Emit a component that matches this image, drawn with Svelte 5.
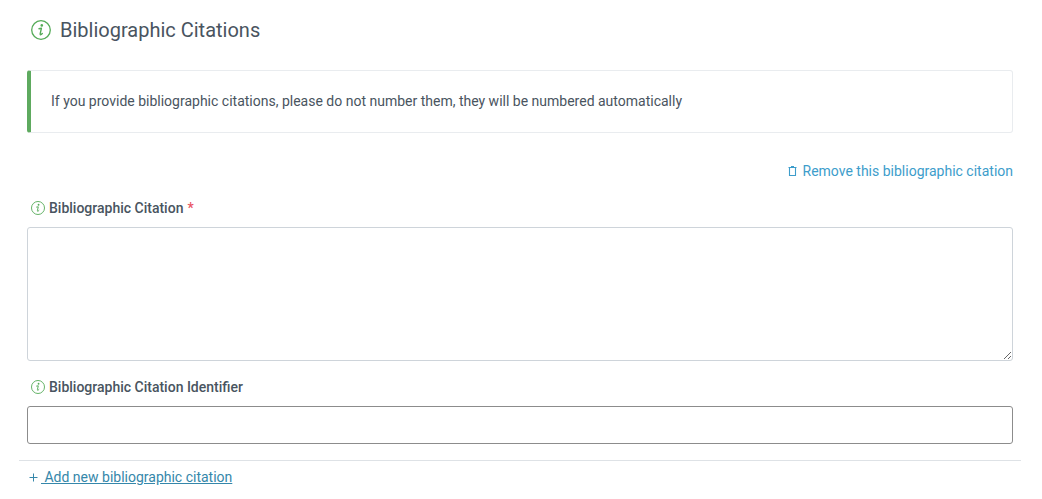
<script lang="ts">
  let citation = $state('');
  let identifier = $state('');
</script>

{#snippet info()}
  <svg class="info" viewBox="0 0 20 20" aria-hidden="true">
    <circle cx="10" cy="10" r="9.3" fill="none" stroke="currentColor" stroke-width="1.3" />
    <circle cx="10.8" cy="5.4" r="1.3" fill="currentColor" />
    <path d="M8 8.7 L10.4 8.3 L9.2 13.6 Q9 15.2 10.2 14.5 L11.3 13.5" fill="none" stroke="currentColor" stroke-width="1.4" stroke-linecap="round" stroke-linejoin="round" />
  </svg>
{/snippet}

<main>
  <h1>{@render info()}Bibliographic Citations</h1>
  <p class="notice">If you provide bibliographic citations, please do not number them, they will be numbered automatically</p>

  <div class="actions">
    <button type="button" class="remove">
      <svg viewBox="0 0 9 11" aria-hidden="true">
        <path d="M0.5 1.5H8.5M3 0.5H6M1.5 2V9.5H7.5V2" fill="none" stroke="currentColor" stroke-width="1.1" />
      </svg>
      Remove this bibliographic citation
    </button>
  </div>

  <label for="citation">{@render info()}Bibliographic Citation<span class="required">*</span></label>
  <textarea id="citation" required bind:value={citation}></textarea>

  <label for="identifier">{@render info()}Bibliographic Citation Identifier</label>
  <input id="identifier" type="text" bind:value={identifier} />

  <footer>
    <button type="button" class="add">
      <svg viewBox="0 0 9 9" aria-hidden="true"><path d="M4.5 0.5V8.5M0.5 4.5H8.5" stroke="currentColor" stroke-width="1" /></svg>
      <span>&nbsp;Add new bibliographic citation</span>
    </button>
  </footer>
</main>

<style>
  :global(body) {
    margin: 0;
    background: #fff;
  }
  main {
    display: flex;
    flex-direction: column;
    box-sizing: border-box;
    padding: 16px 29px 8px 27px;
    font: 14px/21px Roboto, sans-serif;
    color: #495460;
  }
  h1 {
    display: flex;
    align-items: center;
    gap: 9px;
    margin: 0;
    padding-left: 4px;
    font-size: 20px;
    line-height: 28px;
    font-weight: 400;
  }
  .info {
    flex: none;
    width: 14px;
    height: 14px;
    color: #55ab58;
  }
  h1 .info {
    width: 20px;
    height: 20px;
  }
  .notice {
    margin: 26px 0 28px;
    padding: 20px;
    border: 1px solid #e9ecef;
    border-left: 4px solid #5eaa5f;
    border-radius: 3px;
  }
  .actions {
    display: flex;
    justify-content: flex-end;
    margin-bottom: 16px;
  }
  button {
    display: flex;
    align-items: center;
    padding: 0;
    border: 0;
    background: none;
    font: inherit;
    cursor: pointer;
  }
  .remove {
    gap: 6px;
    color: #3d9dcb;
  }
  .remove svg {
    width: 9px;
    height: 11px;
  }
  label {
    display: flex;
    align-items: center;
    gap: 4px;
    padding-left: 4px;
    margin-bottom: 9px;
    line-height: 20px;
    font-weight: 500;
  }
  .required {
    color: #e95464;
  }
  textarea,
  input {
    box-sizing: border-box;
    width: 100%;
    padding: 8px 12px;
    border: 1px solid #ced4da;
    border-radius: 3px;
    background: #fff;
    font: inherit;
    color: inherit;
  }
  textarea {
    height: 134px;
    margin-bottom: 16px;
    resize: vertical;
  }
  input {
    height: 38px;
    border-color: #8c8c8c;
  }
  footer {
    margin: 16px -8px 0;
    padding: 6px 10px;
    border-top: 1px solid #dee2e6;
  }
  .add {
    gap: 3px;
    color: #3587aa;
  }
  .add svg {
    width: 9px;
    height: 9px;
  }
  .add span {
    text-decoration: underline;
  }
</style>
